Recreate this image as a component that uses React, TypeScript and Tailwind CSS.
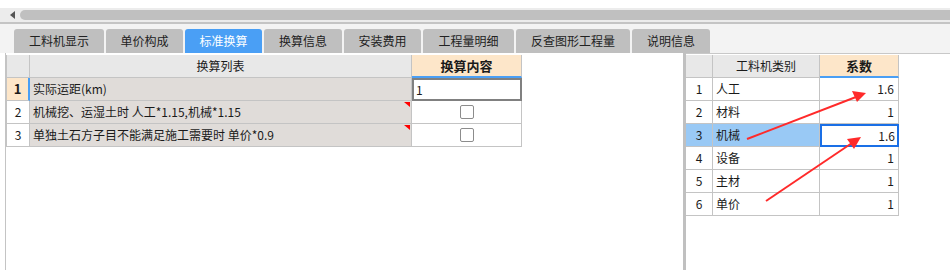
import React from "react";

const FONT = { fontFamily: '"Noto Sans CJK SC", "Noto Sans", sans-serif' };

const tabs = ["工料机显示", "单价构成", "标准换算", "换算信息", "安装费用", "工程量明细", "反查图形工程量", "说明信息"];
const tabWidths = [90, 77, 77, 78, 77, 91, 114, 78];

const rules = [
  { name: "实际运距(km)", kind: "input", value: "1" },
  { name: "机械挖、运湿土时 人工*1.15,机械*1.15", kind: "check", mark: true },
  { name: "单独土石方子目不能满足施工需要时 单价*0.9", kind: "check", mark: true },
];

const coeffs = [
  { name: "人工", value: "1.6" },
  { name: "材料", value: "1" },
  { name: "机械", value: "1.6", selected: true },
  { name: "设备", value: "1" },
  { name: "主材", value: "1" },
  { name: "单价", value: "1" },
];

function Checkbox() {
  return <div className="w-[14px] h-[14px] border border-[#8c8c8c] rounded-[2px] bg-white" />;
}

export default function App() {
  return (
    <div className="relative w-[950px] h-[270px] bg-white overflow-hidden flex flex-col text-[#1a1a1a]" style={FONT}>
      {/* barra de scroll superior */}
      <div className="h-[8px] bg-white" />
      <div className="h-[14px] bg-[#ececec] flex items-center py-[2px]">
        <div className="w-[20px] flex justify-center pl-[4px]">
          <div className="w-0 h-0 border-y-[4px] border-y-transparent border-r-[5px] border-r-[#555]" />
        </div>
        <div className="flex-1 h-[10px] bg-[#c0c0c0] rounded-l-full" />
      </div>
      <div className="h-[2px] bg-[#c4c4c4]" />

      {/* pestañas */}
      <div className="h-[29px] bg-[#f3f3f3] flex items-end pl-[14px] gap-[2px]">
        {tabs.map((t, i) => (
          <div
            key={t}
            style={{ width: tabWidths[i] }}
            className={
              "h-[24px] rounded-t-[3px] flex items-center justify-center text-[12px] " +
              (i === 2 ? "bg-[#4a9ff5] text-white" : "bg-[#bfbfbf] text-[#222]")
            }
          >
            {t}
          </div>
        ))}
      </div>

      {/* contenido */}
      <div className="flex-1 flex">
        {/* panel izquierdo */}
        <div className="w-[683px] flex">
          <div className="w-[6px] border-r border-[#c4c4c4]" />
          <div className="flex-1 pt-[2px] pl-[0px]">
            <div className="grid grid-cols-[23px_382px_110px] border-l border-[#c4c4c4] w-[516px] text-[12px]">
              <div className="h-[23px] bg-[#e8e8e8] border-r border-b border-[#c4c4c4]" />
              <div className="h-[23px] bg-[#e8e8e8] border-r border-b border-[#c4c4c4] flex items-center justify-center">换算列表</div>
              <div className="h-[23px] bg-[#fde6c9] border-r border-[#c4c4c4] border-b-2 border-b-[#4a9ff5] flex items-center justify-center font-bold text-[13px]">换算内容</div>
              {rules.map((r, i) => (
                <React.Fragment key={i}>
                  <div
                    className={
                      "h-[23px] border-b border-[#c4c4c4] flex items-center justify-center " +
                      (i === 0 ? "bg-[#fde6c9] font-bold border-r-2 border-r-[#4a9ff5] text-[13px]" : "bg-white border-r")
                    }
                  >
                    {i + 1}
                  </div>
                  <div className="relative h-[23px] bg-[#e0dcd9] border-r border-b border-[#c4c4c4] flex items-center pl-[3px] whitespace-nowrap">
                    {r.name}
                    {r.mark && (
                      <div className="absolute top-[1px] right-[1px] w-0 h-0 border-l-[6px] border-l-transparent border-t-[5px] border-t-[#ff0000]" />
                    )}
                  </div>
                  {r.kind === "input" ? (
                    <div className="h-[23px] bg-white border-[2px] border-[#808080] flex items-center pl-[2px]">{r.value}</div>
                  ) : (
                    <div className="h-[23px] bg-white border-r border-b border-[#c4c4c4] flex items-center justify-center">
                      <Checkbox />
                    </div>
                  )}
                </React.Fragment>
              ))}
            </div>
          </div>
        </div>

        {/* separador */}
        <div className="w-[3px] bg-[#c0c0c0]" />

        {/* panel derecho */}
        <div className="flex-1 border-t border-[#c8c8c8] pt-[1px]">
          <div className="grid grid-cols-[27px_107px_79px] w-[213px] text-[12px]">
            <div className="h-[23px] bg-[#e8e8e8] border-r border-b border-[#c4c4c4]" />
            <div className="h-[23px] bg-[#e8e8e8] border-r border-b border-[#c4c4c4] flex items-center justify-center">工料机类别</div>
            <div className="h-[23px] bg-[#fde6c9] border-r border-[#c4c4c4] border-b-2 border-b-[#4a9ff5] flex items-center justify-center font-bold text-[13px]">系数</div>
            {coeffs.map((c, i) => (
              <React.Fragment key={c.name}>
                <div className={"h-[23px] border-r border-b border-[#c4c4c4] flex items-center justify-center " + (c.selected ? "bg-[#99c9f5]" : "bg-white")}>
                  {i + 1}
                </div>
                <div className={"h-[23px] border-r border-b border-[#c4c4c4] flex items-center pl-[3px] " + (c.selected ? "bg-[#99c9f5]" : "bg-white")}>
                  {c.name}
                </div>
                {c.selected ? (
                  <div className="h-[23px] bg-white border-[2px] border-[#1a6fe6] flex items-center justify-end pr-[2px]">{c.value}</div>
                ) : (
                  <div className="h-[23px] bg-white border-r border-b border-[#c4c4c4] flex items-center justify-end pr-[4px]">{c.value}</div>
                )}
              </React.Fragment>
            ))}
          </div>
        </div>
      </div>

      {/* flechas rojas de anotación */}
      <svg className="absolute inset-0 pointer-events-none" width="950" height="270" viewBox="0 0 950 270">
        <line x1="747" y1="139" x2="856" y2="97" stroke="#ff2a2a" strokeWidth="2" />
        <polygon points="866,93 852,91 857,102" fill="#ff2a2a" />
        <line x1="766" y1="201" x2="852" y2="143" stroke="#ff2a2a" strokeWidth="2" />
        <polygon points="861,137 847,139 854,149" fill="#ff2a2a" />
      </svg>
    </div>
  );
}
